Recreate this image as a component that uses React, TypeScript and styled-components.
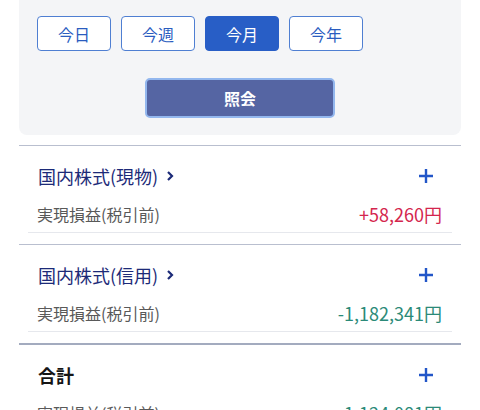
import styled, { createGlobalStyle } from 'styled-components';

const GlobalStyle = createGlobalStyle`
	body {
		margin: 0;
		background: #ffffff;
		font-family: 'Noto Sans CJK JP', 'Noto Sans', sans-serif;
	}
`;

type Tone = 'plus' | 'minus';

const periods = ['今日', '今週', '今月', '今年'];

const sections: { title: string; link: boolean; value: string; tone: Tone }[] = [
	{ title: '国内株式(現物)', link: true, value: '+58,260円', tone: 'plus' },
	{ title: '国内株式(信用)', link: true, value: '-1,182,341円', tone: 'minus' },
	{ title: '合計', link: false, value: '-1,124,081円', tone: 'minus' },
];

export default function App() {
	return (
		<>
			<GlobalStyle />
			<Page>
				<FilterPanel>
					<PeriodRow>
						{periods.map((p) => (
							<PeriodButton key={p} $active={p === '今月'}>
								{p}
							</PeriodButton>
						))}
					</PeriodRow>
					<SearchButton>照会</SearchButton>
				</FilterPanel>
				{sections.map((s, i) => (
					<Section key={s.title} $total={!s.link} $first={i === 0}>
						<TitleRow>
							<Title $total={!s.link}>
								{s.title}
								{s.link && (
									<svg width="8" height="12" viewBox="0 0 8 12">
										<path d="M2 2 L6 6 L2 10" fill="none" stroke="#1c2a78" strokeWidth="2.2" />
									</svg>
								)}
							</Title>
							<PlusIcon width="16" height="16" viewBox="0 0 16 16">
								<path d="M8 1 V15 M1 8 H15" stroke="#2256c8" strokeWidth="2.4" />
							</PlusIcon>
						</TitleRow>
						<DataRow>
							<Label>実現損益(税引前)</Label>
							<Amount $tone={s.tone}>{s.value}</Amount>
						</DataRow>
					</Section>
				))}
			</Page>
		</>
	);
}

const Page = styled.div`
	padding: 0 19px;
`;

const FilterPanel = styled.div`
	background: #f4f5f7;
	border-radius: 0 0 8px 8px;
	padding: 16px 18px 17px;
	display: flex;
	flex-direction: column;
	align-items: center;
	gap: 27px;
`;

const PeriodRow = styled.div`
	align-self: stretch;
	display: flex;
	gap: 10px;
`;

const PeriodButton = styled.button<{ $active: boolean }>`
	width: 74px;
	height: 35px;
	box-sizing: border-box;
	border-radius: 4px;
	border: 1.5px solid ${({ $active }) => ($active ? '#285ec6' : '#4f7fd2')};
	background: ${({ $active }) => ($active ? '#285ec6' : '#ffffff')};
	color: ${({ $active }) => ($active ? '#ffffff' : '#2a5cbf')};
	font-family: inherit;
	font-size: 16px;
	padding: 0;
`;

const SearchButton = styled.button`
	width: 190px;
	height: 40px;
	box-sizing: border-box;
	border-radius: 5px;
	border: 2px solid #93b7ee;
	background: #5565a3;
	color: #ffffff;
	font-family: inherit;
	font-size: 16px;
	font-weight: 700;
	padding: 0;
`;

const Section = styled.div<{ $total: boolean; $first: boolean }>`
	margin-top: ${({ $first }) => ($first ? '10px' : '0')};
	border-top: ${({ $total }) => ($total ? '2px solid #a3abbf' : '1px solid #b9bfcf')};
	padding: 10px 0 11px;
`;

const TitleRow = styled.div`
	height: 40px;
	display: flex;
	align-items: center;
	justify-content: space-between;
	padding: 0 27px 0 19px;
`;

const Title = styled.div<{ $total: boolean }>`
	display: flex;
	align-items: center;
	gap: 8px;
	font-size: 18px;
	font-weight: ${({ $total }) => ($total ? 700 : 400)};
	color: ${({ $total }) => ($total ? '#151515' : '#1c2a78')};
`;

const PlusIcon = styled.svg`
	display: block;
`;

const DataRow = styled.div`
	height: 36px;
	margin: 0 9px;
	padding: 0 10px 0 9px;
	display: flex;
	align-items: center;
	justify-content: space-between;
	border-bottom: 1px solid #e6e8ed;
`;

const Label = styled.span`
	font-size: 16px;
	color: #595959;
`;

const Amount = styled.span<{ $tone: Tone }>`
	font-size: 18px;
	color: ${({ $tone }) => ($tone === 'plus' ? '#d4264e' : '#2b8a78')};
`;
